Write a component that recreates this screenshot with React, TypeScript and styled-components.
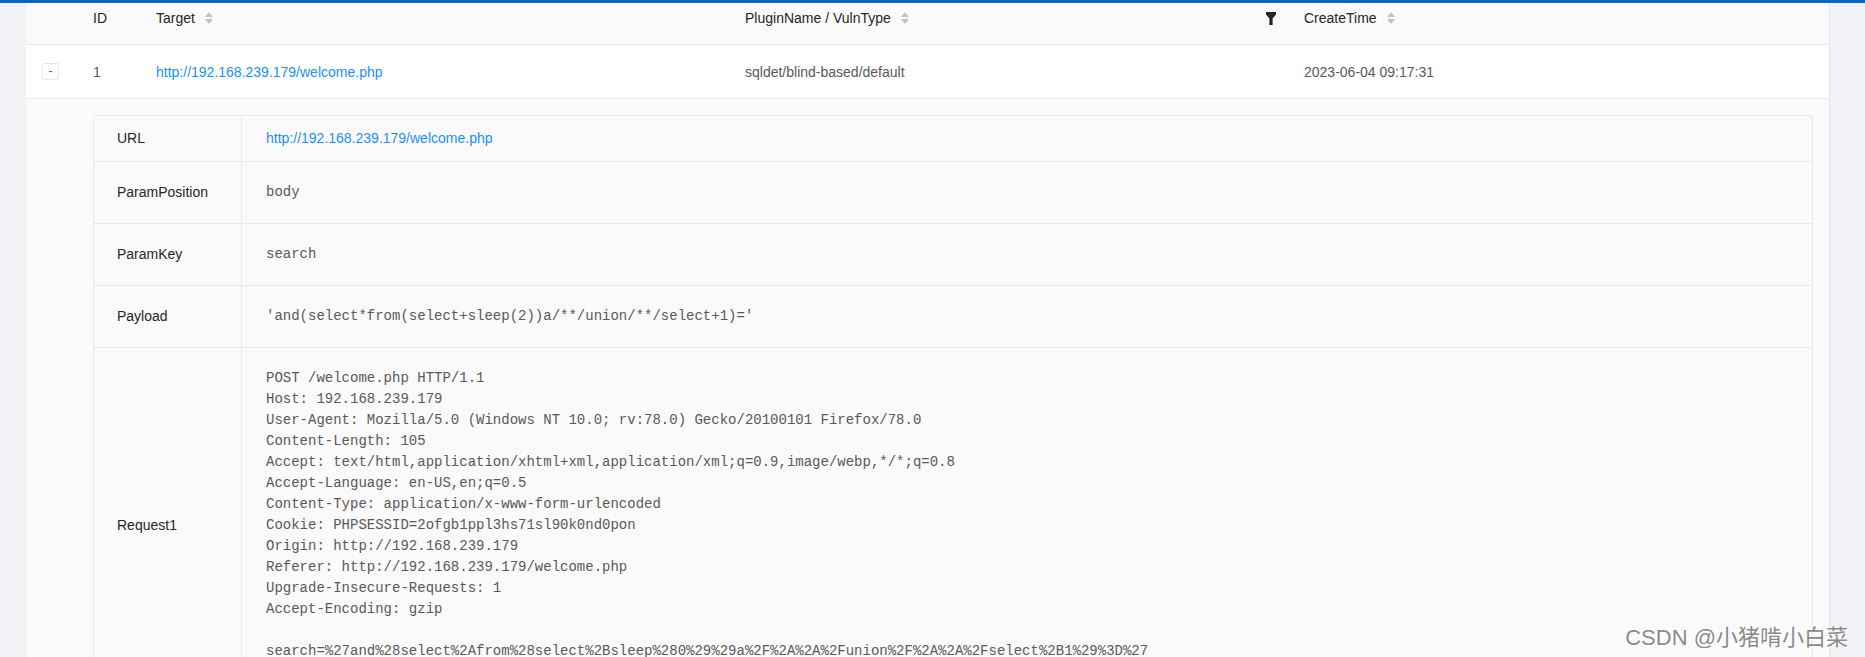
import React from "react"
import styled, { createGlobalStyle } from "styled-components"

const GlobalStyle = createGlobalStyle`
  html, body {
    margin: 0;
    padding: 0;
    background: #f0f2f5;
    overflow: hidden;
  }
  * {
    box-sizing: border-box;
  }
`

const Page = styled.div`
  position: relative;
  height: 657px;
  display: flex;
  flex-direction: column;
  font-family: "Liberation Sans", Arial, sans-serif;
  font-size: 14px;
  color: #595959;
  overflow: hidden;
`
const TopBar = styled.div`
  height: 3px;
  flex: none;
  background: #0d63c4;
`
const Shell = styled.div`
  flex: 1;
  display: grid;
  grid-template-columns: 26px 1804px 1fr;
  min-height: 0;
`
const Gutter = styled.div`
  background: #f0f2f5;
`
const Table = styled.div`
  background: #fff;
  border-right: 1px solid #e6e8ec;
  display: flex;
  flex-direction: column;
`
const columns = "51px 63px 589px 559px 1fr"

const HeaderRow = styled.div`
  display: grid;
  grid-template-columns: ${columns};
  height: 42px;
  background: #fafafa;
  border-bottom: 1px solid #e8e8e8;
`
const HeadCell = styled.div<{ $split?: boolean }>`
  display: flex;
  align-items: flex-start;
  justify-content: ${p => (p.$split ? "space-between" : "flex-start")};
  padding: 4px ${p => (p.$split ? "12px" : "16px")} 0 16px;
  line-height: 22px;
  color: #262626;
`
const HeadTitle = styled.span`
  display: flex;
  align-items: center;
`
const Sorter = styled.span`
  display: inline-flex;
  flex-direction: column;
  gap: 2px;
  margin-left: 10px;
`
const FilterIcon = styled.span`
  display: flex;
  align-items: center;
  height: 22px;
`
const DataRow = styled.div`
  display: grid;
  grid-template-columns: ${columns};
  height: 54px;
  border-bottom: 1px solid #e8e8e8;
`
const Cell = styled.div`
  display: flex;
  align-items: center;
  padding: 0 16px;
  line-height: 22px;
  color: #595959;
`
const ExpandButton = styled.span`
  width: 17px;
  height: 17px;
  border: 1px solid #e8e8e8;
  border-radius: 2px;
  background: #fff;
  display: flex;
  align-items: center;
  justify-content: center;
  font-size: 12px;
  line-height: 1;
  color: #595959;
  padding-bottom: 2px;
`
const Link = styled.span`
  color: #1890ff;
`
const ExpandedRow = styled.div`
  flex: 1;
  display: grid;
  grid-template-columns: 51px 1fr;
  background: #fbfbfb;
  min-height: 0;
`
const ExpandedBody = styled.div`
  padding: 16px 16px 0 16px;
`
const Descriptions = styled.div`
  border: 1px solid #e8e8e8;
  border-radius: 4px;
  background: #fafafa;
`
const DescRow = styled.div`
  display: grid;
  grid-template-columns: 148px 1fr;
  border-bottom: 1px solid #e8e8e8;
`
const Label = styled.div`
  display: flex;
  align-items: center;
  padding: 0 23px;
  border-right: 1px solid #e8e8e8;
  background: #fafafa;
  color: #262626;
  line-height: 21px;
`
const Value = styled.div`
  padding: 12px 24px;
  line-height: 21px;
  min-width: 0;
`
const Code = styled.pre`
  margin: 8px 0;
  font-family: "Liberation Mono", "DejaVu Sans Mono", monospace;
  font-size: 14px;
  line-height: 21px;
  color: #595959;
  white-space: pre;
`
const Watermark = styled.div`
  position: absolute;
  right: 17px;
  bottom: 6px;
  font-family: "Liberation Sans", "Noto Sans CJK SC", sans-serif;
  font-size: 22px;
  line-height: 26px;
  color: #8a8a8a;
  text-shadow: 0 0 1px #fff, 1px 1px 0 #fff;
  white-space: nowrap;
`

function SortCarets() {
  return (
    <Sorter>
      <svg width="8" height="5" viewBox="0 0 8 5">
        <path d="M0 5 L4 0 L8 5 Z" fill="#c4c4c4" />
      </svg>
      <svg width="8" height="5" viewBox="0 0 8 5">
        <path d="M0 0 L8 0 L4 5 Z" fill="#c4c4c4" />
      </svg>
    </Sorter>
  )
}

function Funnel() {
  return (
    <FilterIcon>
      <svg width="10" height="13" viewBox="0 0 10 13">
        <path d="M0 0 H10 V2.5 L6.6 6.5 V13 H3.4 V6.5 L0 2.5 Z" fill="#262626" />
      </svg>
    </FilterIcon>
  )
}

const request = `POST /welcome.php HTTP/1.1
Host: 192.168.239.179
User-Agent: Mozilla/5.0 (Windows NT 10.0; rv:78.0) Gecko/20100101 Firefox/78.0
Content-Length: 105
Accept: text/html,application/xhtml+xml,application/xml;q=0.9,image/webp,*/*;q=0.8
Accept-Language: en-US,en;q=0.5
Content-Type: application/x-www-form-urlencoded
Cookie: PHPSESSID=2ofgb1ppl3hs71sl90k0nd0pon
Origin: http://192.168.239.179
Referer: http://192.168.239.179/welcome.php
Upgrade-Insecure-Requests: 1
Accept-Encoding: gzip

search=%27and%28select%2Afrom%28select%2Bsleep%280%29%29a%2F%2A%2A%2Funion%2F%2A%2A%2Fselect%2B1%29%3D%27

`

export default function App() {
  const details = [
    { label: "ParamPosition", value: "body" },
    { label: "ParamKey", value: "search" },
    { label: "Payload", value: "'and(select*from(select+sleep(2))a/**/union/**/select+1)='" },
    { label: "Request1", value: request },
  ]
  return (
    <Page>
      <GlobalStyle />
      <TopBar />
      <Shell>
        <Gutter />
        <Table>
          <HeaderRow>
            <HeadCell />
            <HeadCell>ID</HeadCell>
            <HeadCell>
              <HeadTitle>Target<SortCarets /></HeadTitle>
            </HeadCell>
            <HeadCell $split>
              <HeadTitle>PluginName / VulnType<SortCarets /></HeadTitle>
              <Funnel />
            </HeadCell>
            <HeadCell>
              <HeadTitle>CreateTime<SortCarets /></HeadTitle>
            </HeadCell>
          </HeaderRow>
          <DataRow>
            <Cell><ExpandButton>-</ExpandButton></Cell>
            <Cell>1</Cell>
            <Cell><Link>http://192.168.239.179/welcome.php</Link></Cell>
            <Cell>sqldet/blind-based/default</Cell>
            <Cell>2023-06-04 09:17:31</Cell>
          </DataRow>
          <ExpandedRow>
            <div />
            <ExpandedBody>
              <Descriptions>
                <DescRow>
                  <Label>URL</Label>
                  <Value><Link>http://192.168.239.179/welcome.php</Link></Value>
                </DescRow>
                {details.map(d => (
                  <DescRow key={d.label}>
                    <Label>{d.label}</Label>
                    <Value><Code>{d.value}</Code></Value>
                  </DescRow>
                ))}
              </Descriptions>
            </ExpandedBody>
          </ExpandedRow>
        </Table>
        <Gutter />
      </Shell>
      <Watermark>CSDN @小猪啃小白菜</Watermark>
    </Page>
  )
}
